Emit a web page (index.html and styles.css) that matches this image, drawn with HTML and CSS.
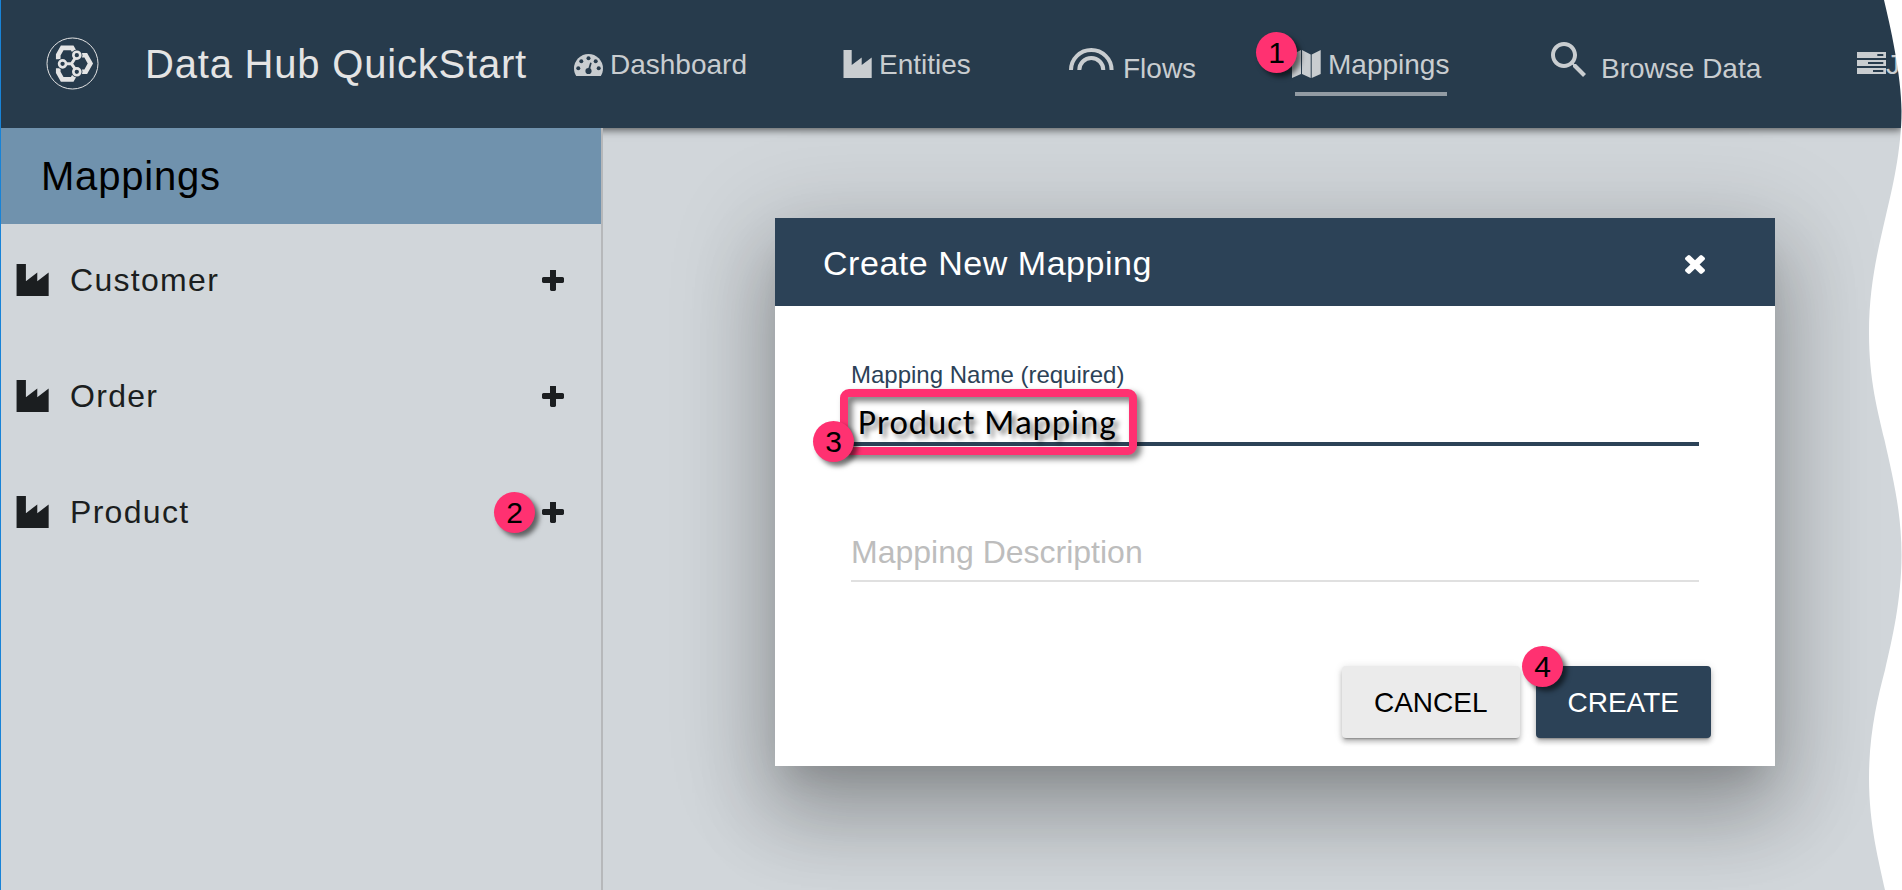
FILE: index.html
```html
<!DOCTYPE html>
<html lang="en">
<head>
<meta charset="utf-8">
<title>Data Hub QuickStart</title>
<link rel="stylesheet" href="styles.css">
</head>
<body>
<svg class="defs" width="0" height="0">
  <symbol id="industry" viewBox="0 0 29 28" preserveAspectRatio="none"><path d="M.5 0H8.7V15L18.7 7.5V15L28.7 7.5V28H.5Z"/></symbol>
  <symbol id="plus" viewBox="192 192 1408 1408"><path d="M1600 736v192q0 40-28 68t-68 28h-416v416q0 40-28 68t-68 28h-192q-40 0-68-28t-28-68v-416h-416q-40 0-68-28t-28-68v-192q0-40 28-68t68-28h416v-416q0-40 28-68t68-28h192q40 0 68 28t28 68v416h416q40 0 68 28t28 68z"/></symbol>
</svg>
<div class="app">
  <header class="topbar">
    <div class="brand">
      <svg class="logo" viewBox="50 36 158 160">
        <circle cx="129" cy="116" r="77" fill="none" stroke="#e4e4e4" stroke-width="3"/>
        <g fill="none" stroke="#e4e4e4">
          <g stroke-width="14">
            <path d="M86 103V90L98 69H128L135 81"/>
            <path d="M86 130V143L98 164H128L135 152"/>
            <path d="M157 91H169L183 116L169 141H157"/>
          </g>
        </g>
        <g fill="#273b4c">
          <circle cx="99" cy="117" r="17"/><circle cx="142" cy="91" r="17"/><circle cx="142" cy="141" r="17"/>
        </g>
        <path fill="none" stroke="#e4e4e4" stroke-width="9" d="M108 117H126L138 98M126 117L138 134"/>
        <g fill="#273b4c" stroke="#e4e4e4" stroke-width="8">
          <circle cx="99" cy="117" r="10.5"/><circle cx="142" cy="91" r="10.5"/><circle cx="142" cy="141" r="10.5"/>
        </g>
      </svg>
      <h1 class="brand-name">Data Hub QuickStart</h1>
    </div>
    <nav class="nav">
      <a class="nav-item">
        <svg class="icon dash" viewBox="0 0 29 22"><path d="M2.2 22C.8 19.6 0 17.300 0 14.500a14.500 14.500 0 0 1 29 0C29 17.300 28.200 19.600 26.800 22Z"/><g fill="#273b4c"><circle cx="4.300" cy="14.300" r="2"/><circle cx="7.300" cy="7.200" r="2"/><circle cx="14.500" cy="4.200" r="2"/><circle cx="21.700" cy="7.200" r="2"/><circle cx="24.700" cy="14.300" r="2"/><circle cx="14.500" cy="17" r="3.100"/><path d="M13.800 16L16.200 8.500L17.700 9L15.700 16.500Z"/></g></svg>
        <span>Dashboard</span></a>
      <a class="nav-item"><svg class="icon ind"><use href="#industry"/></svg><span>Entities</span></a>
      <a class="nav-item low">
        <svg class="icon flow" viewBox="0 0 45 22"><g fill="none" stroke="#c9cdd0" stroke-width="4"><path d="M2 22A20.300 20 0 0 1 42.600 22"/><path d="M10.300 22A12 12 0 0 1 34.300 22"/></g></svg>
        <span>Flows</span></a>
      <a class="nav-item active">
        <svg class="icon map" viewBox="0 0 29 28"><path d="M0 4.500L9 0V24L0 28ZM10 0L18.700 4.500V28L10 24ZM19.700 4.500L28.700 0V24L19.700 28Z"/></svg>
        <span>Mappings</span></a>
      <a class="nav-item low">
        <svg class="icon search" viewBox="3 3 17.490 17.490"><path d="M15.500 14h-.79l-.28-.27C15.410 12.590 16 11.110 16 9.500 16 5.910 13.090 3 9.500 3S3 5.910 3 9.500 5.910 16 9.500 16c1.610 0 3.090-.59 4.230-1.570l.27.28v.79l5 4.990L20.490 19l-4.990-5zm-6 0C7.010 14 5 11.990 5 9.500S7.010 5 9.500 5 14 7.010 14 9.500 11.990 14 9.500 14z"/></svg>
        <span>Browse Data</span></a>
      <a class="nav-item">
        <svg class="icon server" viewBox="0 0 29 22"><path fill-rule="evenodd" d="M0 0H29V6H0ZM20.300 2V4H26.300V2ZM0 8H29V14H0ZM11 10V12H26.300V10ZM0 16H29V22H0ZM16 18V20H26.300V18Z"/></svg>
        <span>J</span></a>
    </nav>
  </header>
  <div class="content">
    <aside class="sidebar">
      <h2 class="side-title">Mappings</h2>
      <ul class="entities">
        <li class="entity"><svg class="ent-icon"><use href="#industry"/></svg><span class="ent-name">Customer</span><svg class="add"><use href="#plus"/></svg></li>
        <li class="entity"><svg class="ent-icon"><use href="#industry"/></svg><span class="ent-name">Order</span><svg class="add"><use href="#plus"/></svg></li>
        <li class="entity"><svg class="ent-icon"><use href="#industry"/></svg><span class="ent-name">Product</span><svg class="add"><use href="#plus"/></svg></li>
      </ul>
    </aside>
    <main class="main"></main>
  </div>
  <section class="dialog">
    <header class="dialog-head">
      <h3 class="dialog-title">Create New Mapping</h3>
      <svg class="close" viewBox="302 366 1188 1188" preserveAspectRatio="none"><path d="M1490 1322q0 40-28 68l-136 136q-28 28-68 28t-68-28l-294-294-294 294q-28 28-68 28t-68-28l-136-136q-28-28-28-68t28-68l294-294-294-294q-28-28-28-68t28-68l136-136q28-28 68-28t68 28l294 294 294-294q28-28 68-28t68 28l136 136q28 28 28 68t-28 68l-294 294 294 294q28 28 28 68z"/></svg>
    </header>
    <div class="dialog-body">
      <div class="field name">
        <label class="label">Mapping Name (required)</label>
        <div class="value">Product Mapping</div>
      </div>
      <div class="field desc">Mapping Description</div>
      <div class="actions">
        <button class="btn">CANCEL</button>
        <button class="btn primary">CREATE</button>
      </div>
    </div>
  </section>
  <div class="highlight"></div>
  <span class="marker m1">1</span>
  <span class="marker m2">2</span>
  <span class="marker m3">3</span>
  <span class="marker m4">4</span>
  <svg class="wave" viewBox="0 0 42 890"><path fill="#fff" d="M24 0C30 25 41.500 75 41.500 111C41.500 150 32 190 26 215C18 250 9 285 9 333C9 380 18 412 24.500 440C32 474 41.500 510 41.500 555C41.500 600 32 640 25 670C17 700 9 735 9 778C9 825 19 862 25 890H42V0Z"/></svg>
</div>
</body>
</html>
```
FILE: styles.css
```css
* { box-sizing: border-box; }
body { margin: 0; font-family: "Liberation Sans", Arial, sans-serif; }
h1, h2, h3, ul { margin: 0; padding: 0; font-weight: 400; list-style: none; }
.defs { position: absolute; }
.app {
  position: relative;
  display: flex;
  flex-direction: column;
  width: 1902px;
  height: 890px;
  overflow: hidden;
  background: #d1d6da;
  border-left: 1px solid #1883d7;
}

.topbar {
  display: flex;
  flex: none;
  height: 128px;
  background: #273b4c;
  box-shadow: 0 2px 8px rgba(0, 0, 0, .6);
  z-index: 1;
}
.brand { display: flex; align-items: center; width: 573px; padding-left: 45px; }
.logo { width: 53px; height: 53px; margin-top: -1px; }
.brand-name { margin-left: 46px; font-size: 40px; letter-spacing: .8px; color: #e4e4e4; white-space: nowrap; }
.nav { display: grid; grid-template-columns: 269px 226px 223px 259px 306px 45px; }
.nav-item {
  position: relative;
  display: flex;
  align-items: center;
  height: 128px;
  font-size: 28px;
  line-height: 32px;
  color: #c9cdd0;
  white-space: nowrap;
}
.nav-item span { margin-top: 2px; }
.nav-item.low span { margin-top: 10px; }
.icon { flex: none; display: block; fill: #c9cdd0; }
.dash { width: 29px; height: 22px; margin: 2px 7px 0 0; }
.ind { width: 29px; height: 28px; margin-right: 7px; }
.flow { width: 45px; height: 22px; margin: -10px 9px 0 0; }
.map { width: 29px; height: 28px; margin-right: 7px; }
.search { width: 35px; height: 35px; margin: -9px 15px 0 0; }
.server { width: 29px; height: 22px; margin-top: -2px; }
.active::after { content: ""; position: absolute; left: 3px; top: 92px; width: 152px; height: 4px; background: #929ba3; }

.content { display: flex; flex: 1; min-height: 0; }
.sidebar { width: 602px; border-right: 2px solid #b6b8ba; z-index: 2; }
.side-title {
  height: 96px;
  padding-left: 40px;
  font-size: 40px;
  line-height: 96px;
  letter-spacing: .8px;
  background: #7092ad;
  color: #000;
}
.entities { display: flex; flex-direction: column; }
.entity {
  display: flex;
  align-items: center;
  height: 116px;
  padding: 0 37px 2px 15px;
  color: #1b1e20;
}
.ent-icon { width: 33px; height: 32px; margin-bottom: 3px; fill: #1b1e20; }
.ent-name { flex: 1; margin: 0 0 2px 21px; font-size: 32px; letter-spacing: 1.3px; }
.add { width: 22px; height: 22px; fill: #1b1e20; }
.main { flex: 1; }

.dialog {
  position: absolute;
  left: 774px;
  top: 218px;
  width: 1000px;
  height: 548px;
  z-index: 3;
  background: #fff;
  box-shadow: 0 18px 92px 16px rgba(0, 0, 0, .14), 0 22px 30px -14px rgba(0, 0, 0, .12), 0 48px 76px 6px rgba(0, 0, 0, .2);
}
.dialog-head {
  display: flex;
  align-items: center;
  justify-content: space-between;
  height: 88px;
  padding: 0 70px 0 48px;
  background: #2c4257;
  color: #fff;
}
.dialog-title { font-size: 34px; letter-spacing: .53px; margin-top: 3px; }
.close { width: 20px; height: 19px; margin-top: 5px; fill: #fff; }
.dialog-body { padding: 55px 64px 0 76px; }
.field { width: 848px; }
.name { height: 85px; border-bottom: 4px solid #2c4257; }
.label { display: block; font-size: 24px; line-height: 28px; color: #2c4257; }
.value {
  margin: 15px 0 0 7px;
  font-family: Carlito, Lato, sans-serif;
  font-size: 35px;
  line-height: 36px;
  letter-spacing: .85px;
  color: #000;
  text-shadow: 4px 4px 5px rgba(0, 0, 0, .5);
}
.desc { margin-top: 84px; height: 52px; border-bottom: 2px solid #e0e0e0; font-size: 32px; line-height: 44px; color: #bdbdbd; }
.actions { display: flex; justify-content: flex-end; gap: 16px; margin-top: 84px; }
.btn {
  height: 72px;
  padding: 2px 32px 0;
  border: 0;
  border-radius: 4px;
  font: 28px "Liberation Sans", Arial, sans-serif;
  background: #ebebeb;
  color: #000;
  box-shadow: 0 3px 2px -2px rgba(0, 0, 0, .3), 0 4px 5px rgba(0, 0, 0, .22), 0 1px 8px rgba(0, 0, 0, .12);
}
.primary { background: #2c4257; color: #fff; }

.highlight {
  position: absolute;
  left: 839px;
  top: 389px;
  width: 297px;
  height: 66px;
  z-index: 4;
  border: 8px solid #ff3171;
  border-radius: 9px;
  filter: drop-shadow(4px 4px 3px rgba(0, 0, 0, .55));
}
.marker {
  position: absolute;
  z-index: 5;
  width: 41px;
  height: 41px;
  border-radius: 50%;
  background: #ff3171;
  color: #000;
  font-size: 30px;
  line-height: 41px;
  text-align: center;
  box-shadow: 4px 4px 5px rgba(0, 0, 0, .55);
}
.m1 { left: 1255px; top: 32px; }
.m2 { left: 493px; top: 492px; }
.m3 { left: 812px; top: 421px; }
.m4 { left: 1521px; top: 646px; }
.wave { position: absolute; right: 0; top: 0; width: 42px; height: 890px; z-index: 6; }
```
